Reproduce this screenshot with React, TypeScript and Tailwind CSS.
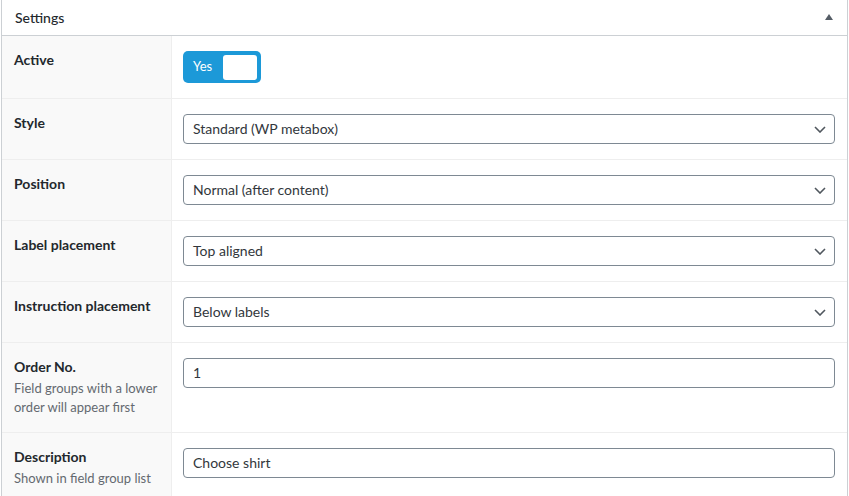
import React from "react";

const font = { fontFamily: "Lato, 'Liberation Sans', sans-serif" };

function Chevron() {
  return (
    <svg width="12" height="7" viewBox="0 0 12 7" className="absolute right-[8px] top-[11px]">
      <path d="M1 1l5 5 5-5" fill="none" stroke="#50575e" strokeWidth="1.6" />
    </svg>
  );
}

function SelectBox({ value }: { value: string }) {
  return (
    <div className="relative flex h-[30px] w-[652px] items-center rounded-[4px] border border-[#7e8993] bg-white pb-px pl-[9px] text-[14px] text-[#32373c]">
      {value}
      <Chevron />
    </div>
  );
}

function TextBox({ value }: { value: string }) {
  return (
    <div className="flex h-[30px] w-[652px] items-center rounded-[4px] border border-[#7e8993] bg-white pb-px pl-[9px] text-[14px] text-[#32373c]">
      {value}
    </div>
  );
}

function Row({
  label,
  hint,
  first,
  children,
}: {
  label: string;
  hint?: string[];
  first?: boolean;
  children: React.ReactNode;
}) {
  return (
    <div className={`flex ${first ? "" : "border-t border-[#eeeeee]"}`}>
      <div
        className={`w-[170px] shrink-0 border-r border-[#eeeeee] bg-[#f9f9f9] px-[12px] pt-[14px] ${
          hint ? "pb-[15px]" : "pb-[16px]"
        }`}
      >
        <div className="text-[14px] font-bold leading-5 text-[#23282d]">{label}</div>
        {hint && (
          <div className="mt-[2px] text-[13px] leading-[19px] text-[#646970]">
            {hint.map((h) => (
              <div key={h}>{h}</div>
            ))}
          </div>
        )}
      </div>
      <div className="py-[15px] pl-[11px]">{children}</div>
    </div>
  );
}

export default function App() {
  return (
    <div className="h-[496px] w-[849px] overflow-hidden bg-white pl-px" style={font}>
      <div className="w-[847px] border-x border-[#ccd0d4] bg-white">
        <div className="flex h-[36px] items-center justify-between border-b border-[#ccd0d4] pb-px pl-[13px] pr-[14px]">
          <span className="text-[14px] font-medium text-[#23282d]">Settings</span>
          <svg width="8" height="6" viewBox="0 0 8 6">
            <path d="M4 0L8 6H0z" fill="#555d66" />
          </svg>
        </div>

        <Row label="Active" first>
          <div className="flex h-[32px] w-[78px] items-center justify-between rounded-[5px] bg-[#1c99d8] pl-[10px] pr-[4px]">
            <span className="pb-px text-[13px] text-white">Yes</span>
            <div className="h-[25px] w-[34px] rounded-[3px] bg-white" />
          </div>
        </Row>
        <Row label="Style">
          <SelectBox value="Standard (WP metabox)" />
        </Row>
        <Row label="Position">
          <SelectBox value="Normal (after content)" />
        </Row>
        <Row label="Label placement">
          <SelectBox value="Top aligned" />
        </Row>
        <Row label="Instruction placement">
          <SelectBox value="Below labels" />
        </Row>
        <Row label="Order No." hint={["Field groups with a lower", "order will appear first"]}>
          <TextBox value="1" />
        </Row>
        <Row label="Description" hint={["Shown in field group list"]}>
          <TextBox value="Choose shirt" />
        </Row>
      </div>
    </div>
  );
}
